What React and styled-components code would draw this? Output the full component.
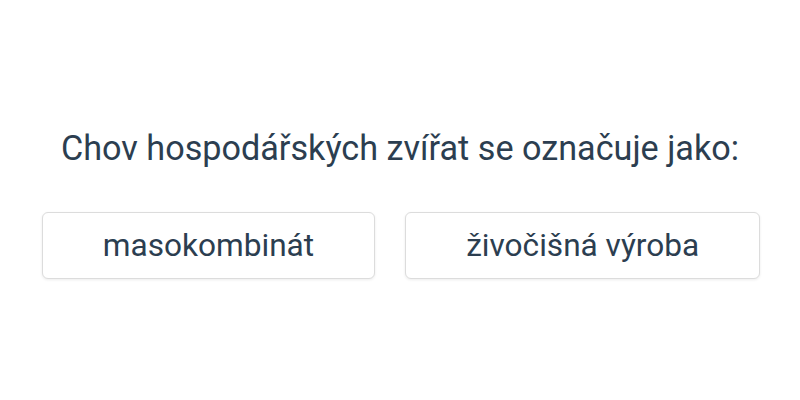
import React from "react";
import styled, { createGlobalStyle } from "styled-components";

const Global = createGlobalStyle`
  html, body { margin: 0; padding: 0; background: #fff; }
  body { font-family: Roboto, "Noto Sans", sans-serif; }
`;

const Page = styled.div`
  width: 800px;
  height: 400px;
  display: flex;
  flex-direction: column;
  align-items: center;
  justify-content: center;
  gap: 42.5px;
  padding-top: 6.5px;
  box-sizing: border-box;
`;

const Question = styled.h1`
  margin: 0;
  font-size: 34.2px;
  font-weight: 400;
  color: #2c3e50;
  line-height: 1.2;
`;

const Options = styled.div`
  display: flex;
  gap: 30px;
  padding-left: 2px;
`;

const Option = styled.button`
  font-family: Roboto, "Noto Sans", sans-serif;
  font-size: 31.6px;
  color: #2c3e50;
  background: #fff;
  border: 1px solid #dcdcdc;
  border-radius: 6px;
  box-shadow: 0 1px 3px rgba(0, 0, 0, 0.08);
  padding: 0 60px;
  height: 67px;
  cursor: pointer;
`;

export default function App() {
  return (
    <>
      <Global />
      <Page>
        <Question>Chov hospodářských zvířat se označuje jako:</Question>
        <Options>
          <Option>masokombinát</Option>
          <Option>živočišná výroba</Option>
        </Options>
      </Page>
    </>
  );
}
